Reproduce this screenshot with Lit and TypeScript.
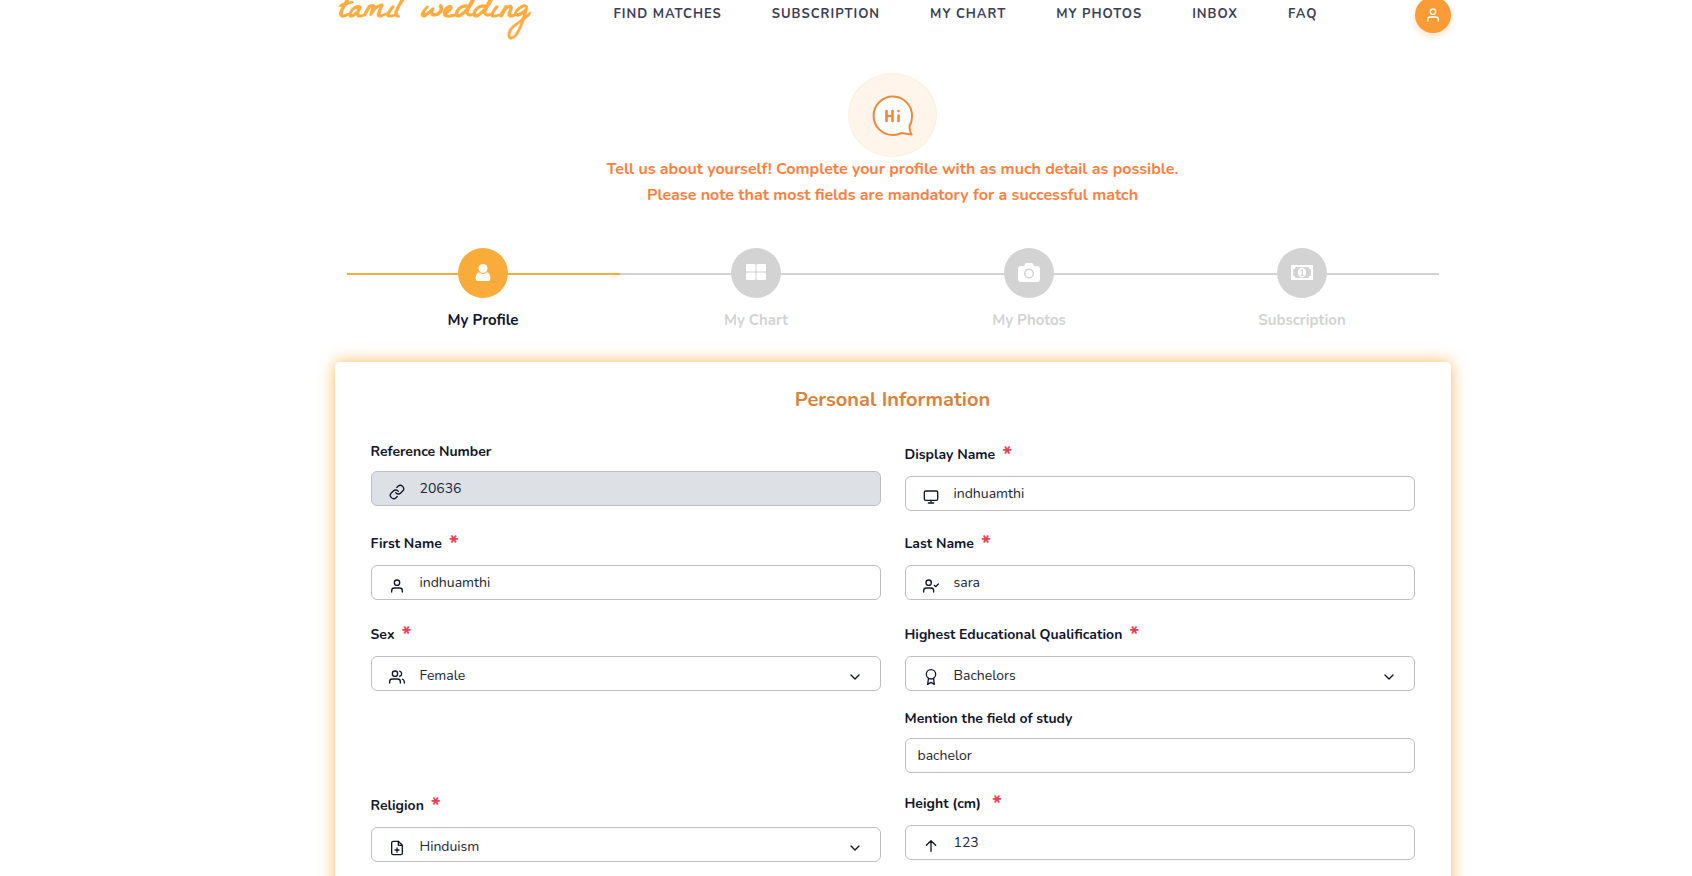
import { LitElement, html, svg, css, nothing } from "lit";
import { customElement, property } from "lit/decorators.js";
import { classMap } from "lit/directives/class-map.js";

const icons: Record<string, unknown> = {
  link: svg`<path d="M10 13a5 5 0 0 0 7.54.54l3-3a5 5 0 0 0-7.07-7.07l-1.72 1.71"/><path d="M14 11a5 5 0 0 0-7.54-.54l-3 3a5 5 0 0 0 7.07 7.07l1.71-1.71"/>`,
  monitor: svg`<rect x="2" y="3" width="20" height="14" rx="2"/><path d="M8 21h8M12 17v4"/>`,
  user: svg`<path d="M20 21v-2a4 4 0 0 0-4-4H8a4 4 0 0 0-4 4v2"/><circle cx="12" cy="7" r="4"/>`,
  userCheck: svg`<path d="M16 21v-2a4 4 0 0 0-4-4H5a4 4 0 0 0-4 4v2"/><circle cx="8.5" cy="7" r="4"/><path d="M17 11l2 2 4-4"/>`,
  users: svg`<path d="M17 21v-2a4 4 0 0 0-4-4H5a4 4 0 0 0-4 4v2"/><circle cx="9" cy="7" r="4"/><path d="M23 21v-2a4 4 0 0 0-3-3.87M16 3.13a4 4 0 0 1 0 7.75"/>`,
  award: svg`<circle cx="12" cy="8" r="7"/><path d="M8.21 13.89L7 23l5-3 5 3-1.21-9.12"/>`,
  filePlus: svg`<path d="M14 2H6a2 2 0 0 0-2 2v16a2 2 0 0 0 2 2h12a2 2 0 0 0 2-2V8z"/><path d="M14 2v6h6M12 18v-6M9 15h6"/>`,
  arrowUp: svg`<path d="M12 20V4M5 11l7-7 7 7"/>`,
  chevron: svg`<path d="M6 9l6 6 6-6"/>`,
};

const lineIcon = (name: string, cls = "") =>
  html`<svg class="line-icon ${cls}" viewBox="0 0 24 24" aria-hidden="true">${icons[name]}</svg>`;

interface Step { label: string; icon: unknown; active?: boolean; }

const steps: Step[] = [
  {
    label: "My Profile",
    active: true,
    icon: svg`<circle cx="11" cy="6.500" r="4.500"/><path d="M7 10.300a5.500 5.500 0 0 0 8 0c2.300.7 3.400 3.200 3.400 6.200 0 1.700-1 2.500-2.200 2.500H5.800c-1.200 0-2.200-.8-2.200-2.500 0-3 1.100-5.500 3.400-6.200z"/>`,
  },
  {
    label: "My Chart",
    icon: svg`<rect x="1" y="2" width="9.500" height="7.500" rx="1.200"/><rect x="11.500" y="2" width="9.500" height="7.500" rx="1.200"/><rect x="1" y="10.500" width="9.500" height="7.500" rx="1.200"/><rect x="11.500" y="10.500" width="9.500" height="7.500" rx="1.200"/>`,
  },
  {
    label: "My Photos",
    icon: svg`<path fill-rule="evenodd" d="M3 4h3l1-2q.4-1 1.500-1h5q1.100 0 1.500 1l1 2h3q3 0 3 3v10q0 3-3 3H3q-3 0-3-3V7q0-3 3-3zM11 6.500a5 5 0 1 0 0 10 5 5 0 0 0 0-10zm0 1.500a3.500 3.500 0 1 1 0 7 3.500 3.500 0 0 1 0-7z"/>`,
  },
  {
    label: "Subscription",
    icon: svg`<path fill-rule="evenodd" d="M0 3h22v15H0zM4.500 5A3 3 0 0 1 2 7.500v6A3 3 0 0 1 4.500 16h13a3 3 0 0 1 2.500-2.500v-6A3 3 0 0 1 17.500 5z"/><ellipse cx="11" cy="10.500" rx="4" ry="4.800"/><path class="cut" d="M9.200 8.500L11 7.200h1V13h1v1H9.500v-1h1.200V8.800l-1.200.7z"/>`,
  },
];

@customElement("form-field")
class FormField extends LitElement {
  @property() label = "";
  @property() value = "";
  @property() icon = "";
  @property({ type: Boolean }) required = false;
  @property({ type: Boolean }) select = false;
  @property({ type: Boolean }) disabled = false;

  static styles = css`
    :host { display: block; min-width: 0; }
    * { box-sizing: border-box; }
    .label { display: flex; height: 21px; margin-bottom: 8px; font-size: 14px; font-weight: 700; line-height: 20px; white-space: pre; color: #12162b; }
    .label.required { height: 26px; padding-top: 3px; }
    .label.select { height: 28px; padding-top: 5px; }
    .star { margin-left: 7px; font-size: 22px; font-weight: 700; line-height: 20px; color: #ea4057; }
    .box { position: relative; }
    .control {
      display: block; width: 100%; height: 35px; margin: 0; padding: 0 12px; appearance: none;
      font: 400 14px "Nunito", "Lato", sans-serif; color: #212532; background: #fff;
      border: 1px solid #bcbec1; border-radius: 6px; outline: 0;
    }
    .control.with-icon { padding-left: 48px; }
    .control:disabled { background: #dde1e6; opacity: 1; }
    select.control { padding-top: 4px; }
    .line-icon {
      position: absolute; top: 13px; left: 18px; width: 16px; height: 16px; fill: none; stroke: #12162b;
      stroke-width: 2; stroke-linecap: round; stroke-linejoin: round; pointer-events: none;
    }
    .line-icon.chevron { left: auto; right: 18px; }
  `;

  render() {
    const cls = { control: true, "with-icon": !!this.icon };
    return html`
      <label class=${classMap({ label: true, required: this.required, select: this.select })} for="c"
        >${this.label}${this.required ? html`<span class="star">*</span>` : nothing}</label>
      <div class="box">
        ${this.select
          ? html`<select id="c" class=${classMap(cls)}><option>${this.value}</option></select>${lineIcon("chevron", "chevron")}`
          : html`<input id="c" type="text" class=${classMap(cls)} .value=${this.value} ?disabled=${this.disabled} />`}
        ${this.icon ? lineIcon(this.icon) : nothing}
      </div>
    `;
  }
}

@customElement("app-root")
class AppRoot extends LitElement {
  static styles = css`
    :host { display: flow-root; overflow: hidden; height: 100vh; font-family: "Nunito", "Lato", sans-serif; color: #12162b; background: #fff; }
    * { box-sizing: border-box; }
    .page { max-width: 1116px; margin: 0 auto; }
    .shell { padding-left: 93px; }
    .header { display: flex; align-items: center; height: 36px; margin-top: -3px; }
    .logo { width: 279px; padding: 0 0 6px 5px; font-family: "La Belle Aurore", "Sacramento", cursive; font-size: 35px; font-weight: 700; line-height: 36px; color: #ffab3d; text-decoration: none; white-space: nowrap; }
    .nav { display: flex; flex: 1; gap: 50px; }
    .nav a { font-size: 13px; font-weight: 700; letter-spacing: 1px; line-height: 20px; padding-bottom: 2px; color: #3b4056; text-decoration: none; white-space: nowrap; }
    .account { display: grid; place-items: center; width: 36px; height: 36px; padding: 0; border: 0; border-radius: 50%; background: #fa9b37; box-shadow: 0 3px 6px rgba(250, 155, 55, 0.3); }
    .account svg { width: 16px; height: 16px; fill: none; stroke: #fff; stroke-width: 2; stroke-linecap: round; stroke-linejoin: round; }
    .intro { display: flex; flex-direction: column; align-items: center; padding-top: 40px; text-align: center; }
    .hello { display: grid; place-items: center; width: 89px; height: 84px; margin-bottom: -1px; padding-top: 1px; border: 1px solid #ffeedd; border-radius: 50%; background: #fff5ea; }
    .hello svg { width: 42px; height: 42px; }
    .intro p { margin: 0; font-size: 16px; font-weight: 700; line-height: 26px; color: #ff7f41; }
    .steps { display: grid; grid-template-columns: repeat(4, 1fr); margin: 40px 12px 0; padding: 0; list-style: none; }
    .step { display: flex; flex-direction: column; align-items: center; gap: 11px; font-size: 15px; font-weight: 700; line-height: 22px; color: #d3d3d3; background: linear-gradient(#d3d3d3, #d3d3d3) 0 25px / 100% 2px no-repeat; }
    .step.active { color: #12162b; background-image: linear-gradient(#f9ac39, #f9ac39); }
    .dot { display: grid; place-items: center; width: 50px; height: 50px; border-radius: 50%; background: #d3d3d3; }
    .active .dot { background: #f9ac39; }
    .dot svg { width: 22px; height: 22px; fill: #fff; }
    .dot .cut { fill: #d3d3d3; }
    .card { margin-top: 31px; padding: 24px 36px 60px; border-radius: 5px; background: #fff; box-shadow: 0 0 16px rgba(255, 152, 20, 0.7); }
    .card h2 { margin: 0 0 28px; font-size: 20px; font-weight: 700; line-height: 28px; text-align: center; color: #d8833b; }
    .row { display: grid; grid-template-columns: 1fr 1fr; gap: 24px; margin-bottom: 18px; }
    .row.text { margin-bottom: 20px; }
    .row .second { grid-column: 2; }
  `;

  render() {
    const nav = ["FIND MATCHES", "SUBSCRIPTION", "MY CHART", "MY PHOTOS", "INBOX", "FAQ"];
    return html`
      <div class="shell"><div class="page">
        <header class="header">
          <a class="logo" href="#">tamil wedding</a>
          <nav class="nav">${nav.map((n) => html`<a href="#">${n}</a>`)}</nav>
          <button class="account" aria-label="Account"><svg viewBox="0 0 24 24">${icons.user}</svg></button>
        </header>
        <section class="intro">
          <div class="hello">
            <svg viewBox="0 0 42 42" fill="none" stroke="#f0883a" stroke-linecap="round" stroke-linejoin="round">
              <path fill="#fff" stroke-width="2" d="M40 21.500A19.200 19.200 0 1 0 21 40q4.500 0 8.500-2l10 1.500q-2.500-4.500-2-8.500 2.500-4 2.500-9.500z"/>
              <path stroke-width="2.600" d="M14.500 16v10M20.500 16v10M14.500 21H20.500M26.500 20.500v5.500M26.500 16v.1"/>
            </svg>
          </div>
          <p>Tell us about yourself! Complete your profile with as much detail as possible.</p>
          <p>Please note that most fields are mandatory for a successful match</p>
        </section>
        <ol class="steps">
          ${steps.map((s) => html`<li class=${classMap({ step: true, active: !!s.active })}>
            <span class="dot"><svg viewBox="0 0 22 22" aria-hidden="true">${s.icon}</svg></span>${s.label}
          </li>`)}
        </ol>
        <form class="card">
          <h2>Personal Information</h2>
          <div class="row text">
            <form-field label="Reference Number" value="20636" icon="link" disabled></form-field>
            <form-field label="Display Name" value="indhuamthi" icon="monitor" required></form-field>
          </div>
          <div class="row text">
            <form-field label="First Name" value="indhuamthi" icon="user" required></form-field>
            <form-field label="Last Name" value="sara" icon="userCheck" required></form-field>
          </div>
          <div class="row">
            <form-field label="Sex" value="Female" icon="users" required select></form-field>
            <form-field label="Highest Educational Qualification" value="Bachelors" icon="award" required select></form-field>
          </div>
          <div class="row">
            <form-field class="second" label="Mention the field of study" value="bachelor"></form-field>
          </div>
          <div class="row">
            <form-field label="Religion" value="Hinduism" icon="filePlus" required select></form-field>
            <form-field label="Height (cm) " value="123" icon="arrowUp" required></form-field>
          </div>
        </form>
      </div></div>
    `;
  }
}
